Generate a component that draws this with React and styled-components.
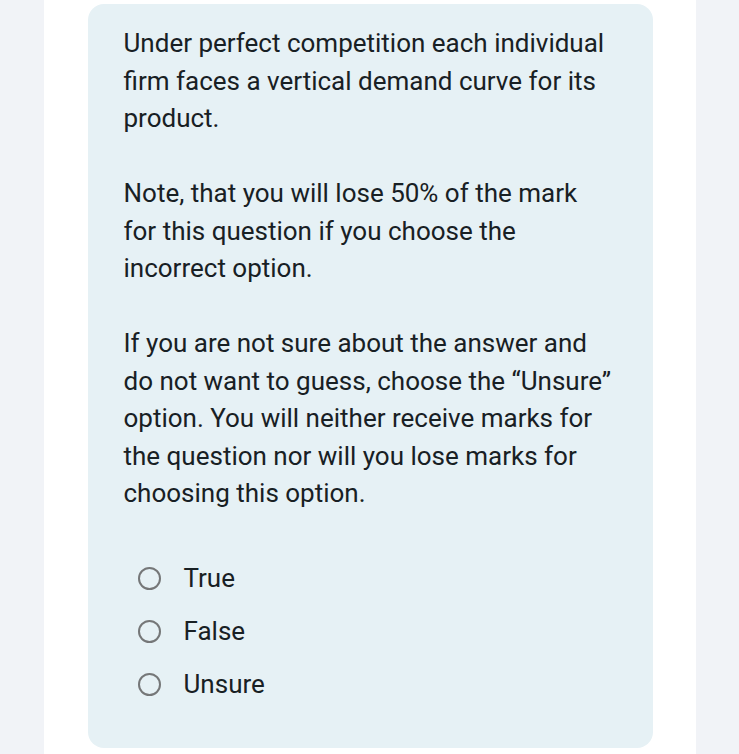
import React from "react";
import styled, { createGlobalStyle } from "styled-components";

const Global = createGlobalStyle`
  html, body { margin: 0; padding: 0; background: #f1f3f7; }
  body { font-family: Roboto, "Liberation Sans", sans-serif; }
`;

const Page = styled.div`
  width: 652px;
  margin: 0 auto;
  background: #ffffff;
  min-height: 754px;
  padding: 4px 43px 6px 44px;
  box-sizing: border-box;
`;

const Card = styled.div`
  background: #e6f1f5;
  border-radius: 16px;
  padding: 21px 38px 37px 36px;
  min-height: 744px;
  box-sizing: border-box;
`;

const Para = styled.p`
  margin: 0 0 37.5px 0;
  font-size: 26px;
  line-height: 37.5px;
  color: #182024;
  &:last-of-type { margin-bottom: 0; }
`;

const Options = styled.div`
  display: flex;
  flex-direction: column;
  margin-top: 39px;
`;

const Option = styled.label`
  display: flex;
  align-items: center;
  height: 53px;
  font-size: 26px;
  color: #182024;
  cursor: pointer;
`;

const Circle = styled.span`
  width: 19px;
  height: 19px;
  border: 2.5px solid #757778;
  border-radius: 50%;
  margin-left: 14px;
  margin-right: 23px;
  flex: none;
`;

export default function App() {
  return (
    <>
      <Global />
      <Page>
        <Card>
          <Para>
            Under perfect competition each individual firm faces a vertical
            demand curve for its product.
          </Para>
          <Para>
            Note, that you will lose 50% of the mark for this question if you
            choose the incorrect option.
          </Para>
          <Para>
            If you are not sure about the answer and do not want to guess,
            choose the “Unsure” option. You will neither receive marks for the
            question nor will you lose marks for choosing this option.
          </Para>
          <Options>
            {["True", "False", "Unsure"].map((o) => (
              <Option key={o}>
                <Circle />
                {o}
              </Option>
            ))}
          </Options>
        </Card>
      </Page>
    </>
  );
}
